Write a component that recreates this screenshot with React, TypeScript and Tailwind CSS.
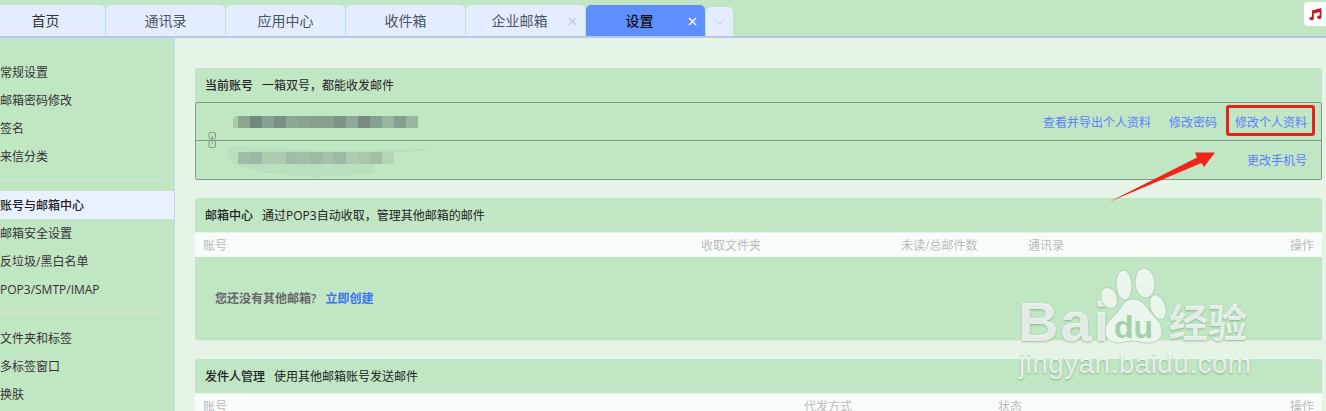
import { ReactNode } from "react";

const tabs = [
  { label: "首页", dark: true },
  { label: "通讯录" },
  { label: "应用中心" },
  { label: "收件箱" },
  { label: "企业邮箱", close: true },
  { label: "设置", close: true, active: true },
];

const menuGroups = [
  ["常规设置", "邮箱密码修改", "签名", "来信分类"],
  ["账号与邮箱中心", "邮箱安全设置", "反垃圾/黑白名单", "POP3/SMTP/IMAP"],
  ["文件夹和标签", "多标签窗口", "换肤"],
];

const topTiles = ["#8ca58f", "#71887f", "#86a28f", "#7a8f86", "#8aa896", "#8ba28e", "#85a08f", "#88a08b", "#7d9386", "#8ca999", "#7b8a7e", "#85a195", "#9ab49e", "#83a093", "#9bb5a0"];
const bottomTiles = ["#a0bda5", "#98b9a5", "#adcbb0", "#aecbb1", "#9fbca8", "#a1bea6", "#9dbba3", "#a5c1a7", "#9cbba7", "#afcbb1", "#abc7ac", "#a2bfa3", "#b4d4b8"];

function CloseIcon({ active }: { active?: boolean }) {
  return (
    <svg width="9" height="9" viewBox="0 0 9 9" className="absolute right-[8px] top-[12px]">
      <path d="M1 1l7 7M8 1l-7 7" stroke={active ? "#ffffff" : "#c4ccd8"} strokeWidth="1.3" fill="none" />
    </svg>
  );
}

function PanelHeader({ title, desc }: { title: string; desc: string }) {
  return (
    <div className="flex h-[34px] items-center gap-[9px] rounded-t-[3px] bg-[#c1e6c4] pl-[10px] pt-[2px] text-[12px] text-[#222]">
      <span className="font-medium">{title}</span>
      <span>{desc}</span>
    </div>
  );
}

function TableHead({ children, columns }: { children: ReactNode; columns: string }) {
  return (
    <div className={`mt-px grid h-[24px] items-center bg-[#f8fcf9] pl-[8px] pr-[8px] pt-[2px] text-[12px] text-[#b9b9c2] ${columns}`}>
      {children}
    </div>
  );
}

function Mosaic() {
  return (
    <svg width="240" height="75" viewBox="0 0 240 75" className="absolute left-[29px] top-0">
      <path d="M8 16c1-2 2-3 5-3v12H8z" fill="#a9c9a9" />
      <g>
        {topTiles.map((c, i) => (
          <rect key={i} x={13 + i * 12} y="13" width="12" height="12" fill={c} />
        ))}
      </g>
      <path d="M2 48c2-6 14-6 30-3 60 3 130 1 178 1 -20 3 -50 4 -60 5v20l-60 3 -50 -4 -28 -8C6 61 2 54 2 48z" fill="#b9dfbf" />
      <g>
        {bottomTiles.map((c, i) => (
          <rect key={i} x={13 + i * 12} y="49" width="12" height="12" fill={c} />
        ))}
      </g>
    </svg>
  );
}

function Watermark() {
  return (
    <div className="pointer-events-none absolute left-[1010px] top-[275px] h-[110px] w-[250px] font-['Liberation_Sans','Noto_Sans_CJK_SC',sans-serif] text-white/75 [text-shadow:0_1px_2px_rgba(90,130,100,0.5)]">
      <span className="absolute left-[8px] top-[17px] text-[56px] font-bold leading-[60px] tracking-[2px]">Bai</span>
      <svg width="66" height="80" viewBox="0 0 66 80" className="absolute -top-[7px] left-[92px]">
        <g fill="#eaf6ec" stroke="#a8c8ac" strokeWidth="0.8">
          <ellipse cx="7" cy="30" rx="8" ry="11" transform="rotate(-25 7 30)" />
          <ellipse cx="22" cy="17" rx="8" ry="15" transform="rotate(-4 22 17)" />
          <ellipse cx="43" cy="15" rx="10" ry="15" transform="rotate(-6 43 15)" />
          <ellipse cx="56" cy="39" rx="7.500" ry="13" transform="rotate(-20 56 39)" />
          <path d="M31 31c10 0 13 8 19 15 6 7 10 10 10 17 0 9-8 13-17 12-5-1-9-2-13-2-5 0-9 2-14 2C8 75 3 70 3 63c0-8 5-11 10-16 6-6 8-16 18-16z" />
        </g>
      </svg>
      <span className="absolute left-[104px] top-[35px] text-[32px] font-bold leading-[34px] text-[#a5d0aa] [text-shadow:none]">du</span>
      <span className="absolute left-[159px] top-[27px] text-[39px] font-bold leading-[44px]">经验</span>
      <span className="absolute left-[9px] top-[72px] text-[28px] leading-[34px] tracking-[0.4px]">jingyan.baidu.com</span>
    </div>
  );
}

export default function App() {
  return (
    <div className="relative flex h-[411px] w-[1326px] flex-col overflow-hidden bg-[#e6f4e8] font-['Open_Sans','Noto_Sans_CJK_SC',sans-serif]">
      <header className="relative flex h-[38px] shrink-0 items-end border-b-2 border-[#b4c8ee] bg-[#c1e6c4]">
        <div className="-ml-[14px] flex items-end gap-px">
          {tabs.map((tab) => (
            <div
              key={tab.label}
              className={
                tab.active
                  ? "relative flex h-[31px] w-[119px] items-center justify-center rounded-t-[5px] bg-[#5f8fff] pr-[12px] text-[14px] font-medium text-[#111]"
                  : tab.close
                    ? "relative flex h-[31px] w-[119px] items-center justify-center rounded-t-[5px] bg-[#e3edff] pr-[12px] text-[14px] text-[#4b5563]"
                    : tab.dark
                      ? "relative flex h-[31px] w-[119px] items-center justify-center rounded-t-[5px] bg-[#e3edff] text-[14px] text-[#333]"
                      : "relative flex h-[31px] w-[119px] items-center justify-center rounded-t-[5px] bg-[#e3edff] text-[14px] text-[#4b5563]"
              }
            >
              {tab.label}
              {tab.close ? <CloseIcon active={tab.active} /> : null}
            </div>
          ))}
          <div className="flex h-[29px] w-[27px] items-center justify-center rounded-t-[5px] bg-[#e3edff]">
            <svg width="9" height="6" viewBox="0 0 9 6">
              <path d="M0.5 0.5L4.5 5L8.5 0.5" stroke="#c4ccd8" fill="none" />
            </svg>
          </div>
        </div>
        <div className="absolute right-0 top-[2px] flex h-[24px] w-[22px] items-center justify-center rounded-l-[4px] bg-white">
          <svg width="14" height="13" viewBox="0 0 14 13" className="ml-[2px]">
            <path d="M3 2.500L12.500 0v9.200a2.200 1.800 0 1 1-1.800-1.700V4L4.800 5.400v5a2.200 1.800 0 1 1-1.800-1.700z" fill="#bb1f24" />
          </svg>
        </div>
      </header>

      <div className="flex min-h-0 flex-1">
        <aside className="w-[175px] shrink-0 border-r border-[#c5d5f5] bg-[#c1e6c4] pt-[20px] text-[12px] text-[#333]">
          {menuGroups.map((group, g) => (
            <div key={g}>
              {group.map((item) => (
                <div
                  key={item}
                  className={
                    item === "账号与邮箱中心"
                      ? "flex h-[28px] items-center bg-[#e9f0ff] pt-[2px] font-medium text-[#222]"
                      : "flex h-[28px] items-center pt-[2px]"
                  }
                >
                  {item}
                </div>
              ))}
              {g < menuGroups.length - 1 ? <div className="my-[10px] h-px w-[163px] bg-[#d5e5d8]" /> : null}
            </div>
          ))}
        </aside>

        <main className="min-w-0 flex-1 pl-[20px] pr-[4px] pt-[30px]">
          <section className="rounded-[3px]">
            <PanelHeader title="当前账号" desc="一箱双号，都能收发邮件" />
            <div className="relative rounded-[2px] border border-[#7f9a85] bg-[#c1e6c4] text-[12px] text-[#5d7eff]">
              <div className="flex h-[38px] items-center justify-end gap-[18px] border-b border-[#7f9a85] pr-[14px] pt-[3px]">
                <span>查看并导出个人资料</span>
                <span>修改密码</span>
                <span>修改个人资料</span>
              </div>
              <div className="flex h-[38px] items-center justify-end pr-[14px] pt-[2px]">
                <span>更改手机号</span>
              </div>
              <Mosaic />
              <svg width="9" height="16" viewBox="0 0 9 16" className="absolute left-[12px] top-[29px]">
                <g fill="none" stroke="#7f9a85" strokeWidth="1">
                  <rect x="1" y="0.5" width="6.5" height="6.5" rx="1.5" />
                  <rect x="1" y="8.5" width="6.5" height="7" rx="1.5" />
                  <path d="M4.2 4v8" />
                </g>
              </svg>
            </div>
          </section>

          <section className="mt-[18px]">
            <PanelHeader title="邮箱中心" desc="通过POP3自动收取，管理其他邮箱的邮件" />
            <TableHead columns="grid-cols-[498px_200px_127px_1fr_auto]">
              <span>账号</span>
              <span>收取文件夹</span>
              <span>未读/总邮件数</span>
              <span>通讯录</span>
              <span>操作</span>
            </TableHead>
            <div className="flex h-[84px] items-center gap-[9px] border-b border-[#dde9e0] bg-[#c1e6c4] pl-[20px] text-[12px] font-semibold text-[#666]">
              <span>您还没有其他邮箱?</span>
              <span className="text-[#3b74f0]">立即创建</span>
            </div>
          </section>

          <section className="mt-[18px]">
            <PanelHeader title="发件人管理" desc="使用其他邮箱账号发送邮件" />
            <TableHead columns="grid-cols-[601px_194px_1fr_auto]">
              <span>账号</span>
              <span>代发方式</span>
              <span>状态</span>
              <span>操作</span>
            </TableHead>
          </section>
        </main>
      </div>

      {/* screenshot annotations */}
      <div className="pointer-events-none absolute left-[1226px] top-[105px] h-[31px] w-[89px] rounded-[3px] border-[3px] border-[#e8221a]" />
      <svg width="120" height="60" viewBox="0 0 120 60" className="pointer-events-none absolute left-[1105px] top-[148px]">
        <path d="M4 54L92 9.500 90 4.500L110 4.500 99 19 96.500 15z" fill="#f0241a" />
      </svg>
      <Watermark />
    </div>
  );
}
